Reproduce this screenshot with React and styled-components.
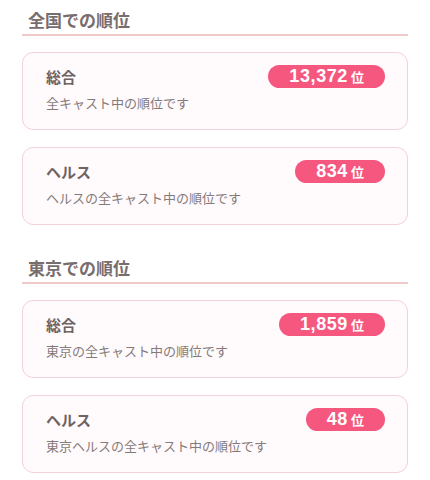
import styled, { createGlobalStyle } from 'styled-components'

const GlobalStyle = createGlobalStyle`
    body {
        margin: 0;
        background: #ffffff;
        font-family: "Noto Sans CJK JP", "Noto Sans", sans-serif;
    }
`

const Page = styled.div`
    padding: 0 22px;
`

const Section = styled.section`
    & + & {
        margin-top: 23px;
    }
`

const Heading = styled.h2`
    margin: 0 0 16px;
    padding: 8px 6px 2px;
    font-size: 17px;
    line-height: 24px;
    font-weight: 700;
    color: #786d6d;
    border-bottom: 2px solid #efcaca;
`

const CardList = styled.div`
    display: flex;
    flex-direction: column;
    gap: 17px;
`

const Card = styled.div`
    background: #fffafc;
    border: 1px solid #f5d2d8;
    border-radius: 11px;
    padding: 11px 22px 16px 23px;
`

const CardHead = styled.div`
    display: flex;
    align-items: center;
    justify-content: space-between;
    height: 24px;
`

const CardTitle = styled.span`
    font-size: 15px;
    font-weight: 700;
    color: #6e6262;
`

const RankBadge = styled.span`
    display: flex;
    align-items: baseline;
    justify-content: center;
    gap: 3px;
    height: 23px;
    padding: 0 21px;
    border-radius: 12px;
    background: #f5577f;
    color: #ffffff;
    line-height: 23px;
`

const RankNumber = styled.span`
    font-family: "Liberation Sans", Arial, sans-serif;
    font-size: 18px;
    font-weight: 700;
    letter-spacing: 0.6px;
`

const RankUnit = styled.span`
    font-size: 13px;
    font-weight: 700;
`

const CardNote = styled.p`
    margin: 5px 0 0;
    font-size: 13px;
    line-height: 20px;
    color: #857a7a;
`

const sections = [
    {
        title: '全国での順位',
        items: [
            { name: '総合', rank: '13,372', note: '全キャスト中の順位です' },
            { name: 'ヘルス', rank: '834', note: 'ヘルスの全キャスト中の順位です' },
        ],
    },
    {
        title: '東京での順位',
        items: [
            { name: '総合', rank: '1,859', note: '東京の全キャスト中の順位です' },
            { name: 'ヘルス', rank: '48', note: '東京ヘルスの全キャスト中の順位です' },
        ],
    },
]

export default function App() {
    return (
        <>
            <GlobalStyle />
            <Page>
                {sections.map((section) => (
                    <Section key={section.title}>
                        <Heading>{section.title}</Heading>
                        <CardList>
                            {section.items.map((item) => (
                                <Card key={item.note}>
                                    <CardHead>
                                        <CardTitle>{item.name}</CardTitle>
                                        <RankBadge>
                                            <RankNumber>{item.rank}</RankNumber>
                                            <RankUnit>位</RankUnit>
                                        </RankBadge>
                                    </CardHead>
                                    <CardNote>{item.note}</CardNote>
                                </Card>
                            ))}
                        </CardList>
                    </Section>
                ))}
            </Page>
        </>
    )
}
